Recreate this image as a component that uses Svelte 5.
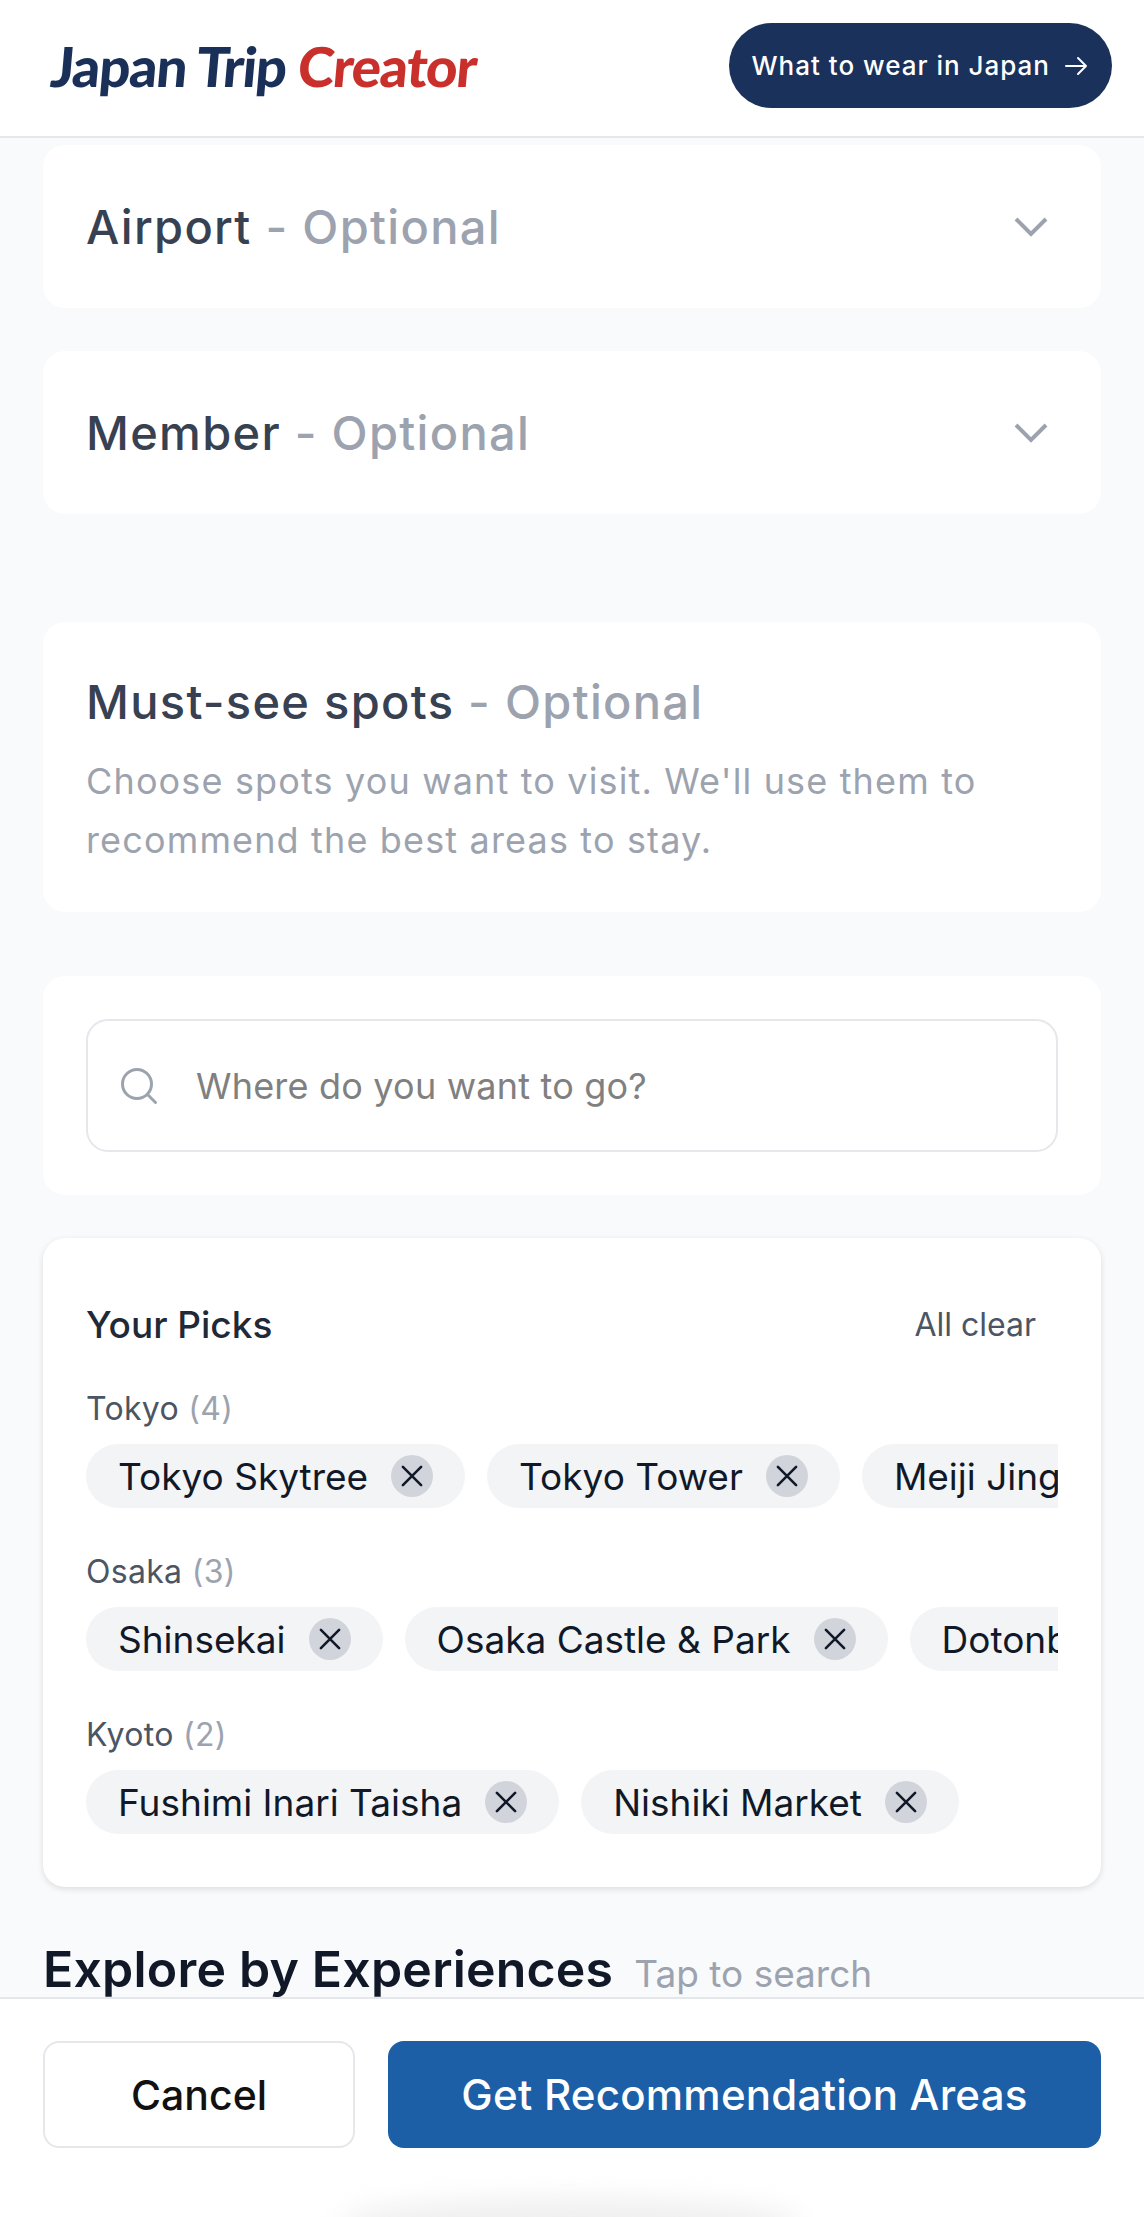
<script>
  const optional = ["Airport", "Member"];
  const groups = [
    { city: "Tokyo", spots: ["Tokyo Skytree", "Tokyo Tower", "Meiji Jingu", "Senso-ji"] },
    { city: "Osaka", spots: ["Shinsekai", "Osaka Castle & Park", "Dotonbori"] },
    { city: "Kyoto", spots: ["Fushimi Inari Taisha", "Nishiki Market"] },
  ];
</script>

<div class="page">
  <header>
    <div class="logo">Japan Trip <span>Creator</span></div>
    <a class="wear" href="#wear">
      What to wear in Japan
      <svg width="24" height="24" viewBox="0 0 24 24" fill="none" stroke="currentColor" stroke-width="2" stroke-linecap="round" stroke-linejoin="round">
        <path d="M2 12h20M14 4l8 8-8 8" />
      </svg>
    </a>
  </header>

  <main>
    {#each optional as name}
      <section class="card fold">
        <h2>{name} <em>- Optional</em></h2>
        <svg class="chev" width="36" height="22" viewBox="0 0 36 22" fill="none" stroke="#9ca3af" stroke-width="4">
          <path d="M3 3l15 15L33 3" />
        </svg>
      </section>
    {/each}

    <section class="card intro">
      <h2>Must-see spots <em>- Optional</em></h2>
      <p>Choose spots you want to visit. We'll use them to recommend the best areas to stay.</p>
    </section>

    <section class="card search">
      <div class="field">
        <svg width="38" height="38" viewBox="0 0 38 38" fill="none" stroke="#9ca3af" stroke-width="3" stroke-linecap="round">
          <circle cx="17" cy="17" r="14.5" />
          <path d="M27.5 27.5l8 8" />
        </svg>
        <span>Where do you want to go?</span>
      </div>
    </section>

    <section class="card picks">
      <div class="picks-head">
        <h3>Your Picks</h3>
        <button class="clear">All clear</button>
      </div>
      {#each groups as g}
        <div class="group">
          <div class="city">{g.city} <span>({g.spots.length})</span></div>
          <div class="chips">
            {#each g.spots as s}
              <div class="chip">
                {s}
                <span class="x">
                  <svg width="26" height="26" viewBox="0 0 20 20" stroke="#111827" stroke-width="2" stroke-linecap="round">
                    <path d="M3 3l14 14M17 3L3 17" />
                  </svg>
                </span>
              </div>
            {/each}
          </div>
        </div>
      {/each}
    </section>

    <div class="explore">
      <h2>Explore by Experiences</h2>
      <span>Tap to search</span>
    </div>
  </main>

  <footer>
    <button class="cancel">Cancel</button>
    <button class="go">Get Recommendation Areas</button>
  </footer>
  <div class="home"></div>
</div>

<style>
  :global(body) {
    margin: 0;
  }

  * {
    box-sizing: border-box;
  }

  .page {
    position: relative;
    width: 1144px;
    height: 2217px;
    display: flex;
    flex-direction: column;
    overflow: hidden;
    background: #f9fafb;
    font-family: Inter, "Liberation Sans", sans-serif;
    color: #111827;
  }

  header {
    flex: none;
    height: 138px;
    padding: 0 32px 0 51px;
    display: flex;
    align-items: center;
    justify-content: space-between;
    background: #fff;
    border-bottom: 2px solid #e5e7eb;
  }

  .logo {
    margin-bottom: 4px;
    font-family: Lato, sans-serif;
    font-weight: 900;
    font-size: 55px;
    letter-spacing: -1.2px;
    color: #1a3059;
    white-space: nowrap;
    transform: skewX(-5deg);
  }

  .logo span {
    color: #c9302c;
  }

  .wear {
    display: flex;
    align-items: center;
    gap: 14px;
    height: 85px;
    margin-bottom: 5px;
    padding: 0 24px 0 23px;
    border-radius: 43px;
    background: #1a315c;
    color: #fff;
    font-size: 26px;
    font-weight: 500;
    letter-spacing: 1px;
    text-decoration: none;
    white-space: nowrap;
  }

  main {
    flex: 1;
    min-height: 0;
    overflow: hidden;
    padding: 7px 43px 0;
  }

  .card {
    background: #fff;
    border-radius: 22px;
  }

  .fold {
    height: 163px;
    margin-bottom: 43px;
    padding: 0 52px 0 43px;
    display: flex;
    align-items: center;
    justify-content: space-between;
  }

  h2 {
    margin: 0;
    font-size: 47px;
    font-weight: 550;
    letter-spacing: 1.3px;
    color: #374151;
  }

  h2 em {
    font-style: normal;
    color: #9ca3af;
  }

  .intro {
    height: 290px;
    margin-top: 108px;
    padding: 51px 43px 0;
  }

  .intro p {
    margin: 22px 0 0;
    font-size: 36px;
    line-height: 59px;
    letter-spacing: 1.15px;
    color: #9ca3af;
  }

  .search {
    height: 219px;
    margin-top: 64px;
    padding: 43px;
  }

  .field {
    height: 133px;
    padding: 0 32px;
    display: flex;
    align-items: center;
    gap: 38px;
    border: 2px solid #e5e7eb;
    border-radius: 22px;
    font-size: 36px;
    letter-spacing: 0.2px;
    color: #808080;
  }

  .picks {
    height: 649px;
    margin-top: 43px;
    padding: 60px 43px 0;
    box-shadow: 0 2px 6px rgba(0, 0, 0, 0.12);
  }

  .picks-head {
    display: flex;
    align-items: center;
    justify-content: space-between;
    height: 52px;
    margin-bottom: 38px;
  }

  h3 {
    margin: 0;
    font-size: 37px;
    font-weight: 500;
    color: #1f2937;
  }

  .clear {
    padding: 0 22px 0 0;
    border: 0;
    background: none;
    font: inherit;
    font-size: 32px;
    color: #4b5563;
  }

  .group {
    margin-bottom: 43px;
  }

  .city {
    height: 42px;
    margin-bottom: 14px;
    font-size: 32px;
    line-height: 42px;
    letter-spacing: 0.3px;
    color: #4b5563;
  }

  .city span {
    color: #9ca3af;
  }

  .chips {
    display: flex;
    gap: 22px;
    overflow: hidden;
  }

  .chip {
    flex: none;
    height: 64px;
    padding: 0 32px;
    display: flex;
    align-items: center;
    gap: 23px;
    border-radius: 32px;
    background: #f3f4f6;
    font-size: 37px;
    white-space: nowrap;
  }

  .x {
    width: 42px;
    height: 42px;
    display: flex;
    align-items: center;
    justify-content: center;
    border-radius: 50%;
    background: #d1d5db;
  }

  .explore {
    margin-top: 52px;
    display: flex;
    align-items: baseline;
    gap: 21px;
    white-space: nowrap;
  }

  .explore h2 {
    font-size: 50px;
    font-weight: 600;
    letter-spacing: 0.2px;
    color: #111827;
  }

  .explore span {
    font-size: 37px;
    color: #9ca3af;
  }

  footer {
    flex: none;
    height: 220px;
    padding: 42px 43px 0;
    display: flex;
    align-items: flex-start;
    gap: 33px;
    background: #fff;
    border-top: 2px solid #e5e7eb;
  }

  footer button {
    height: 107px;
    border-radius: 16px;
    font: inherit;
    font-size: 41px;
  }

  .cancel {
    width: 312px;
    background: #fff;
    border: 2px solid #e5e7eb;
    color: #111;
    font-weight: 500;
  }

  button.go {
    flex: 1;
    border: 0;
    background: #1c5fa6;
    color: #fff;
    font-weight: 550;
    font-size: 42px;
    letter-spacing: 0.25px;
  }

  .home {
    position: absolute;
    left: 340px;
    bottom: -30px;
    width: 460px;
    height: 50px;
    border-radius: 50%;
    background: #f0f0f0;
    filter: blur(12px);
  }
</style>
